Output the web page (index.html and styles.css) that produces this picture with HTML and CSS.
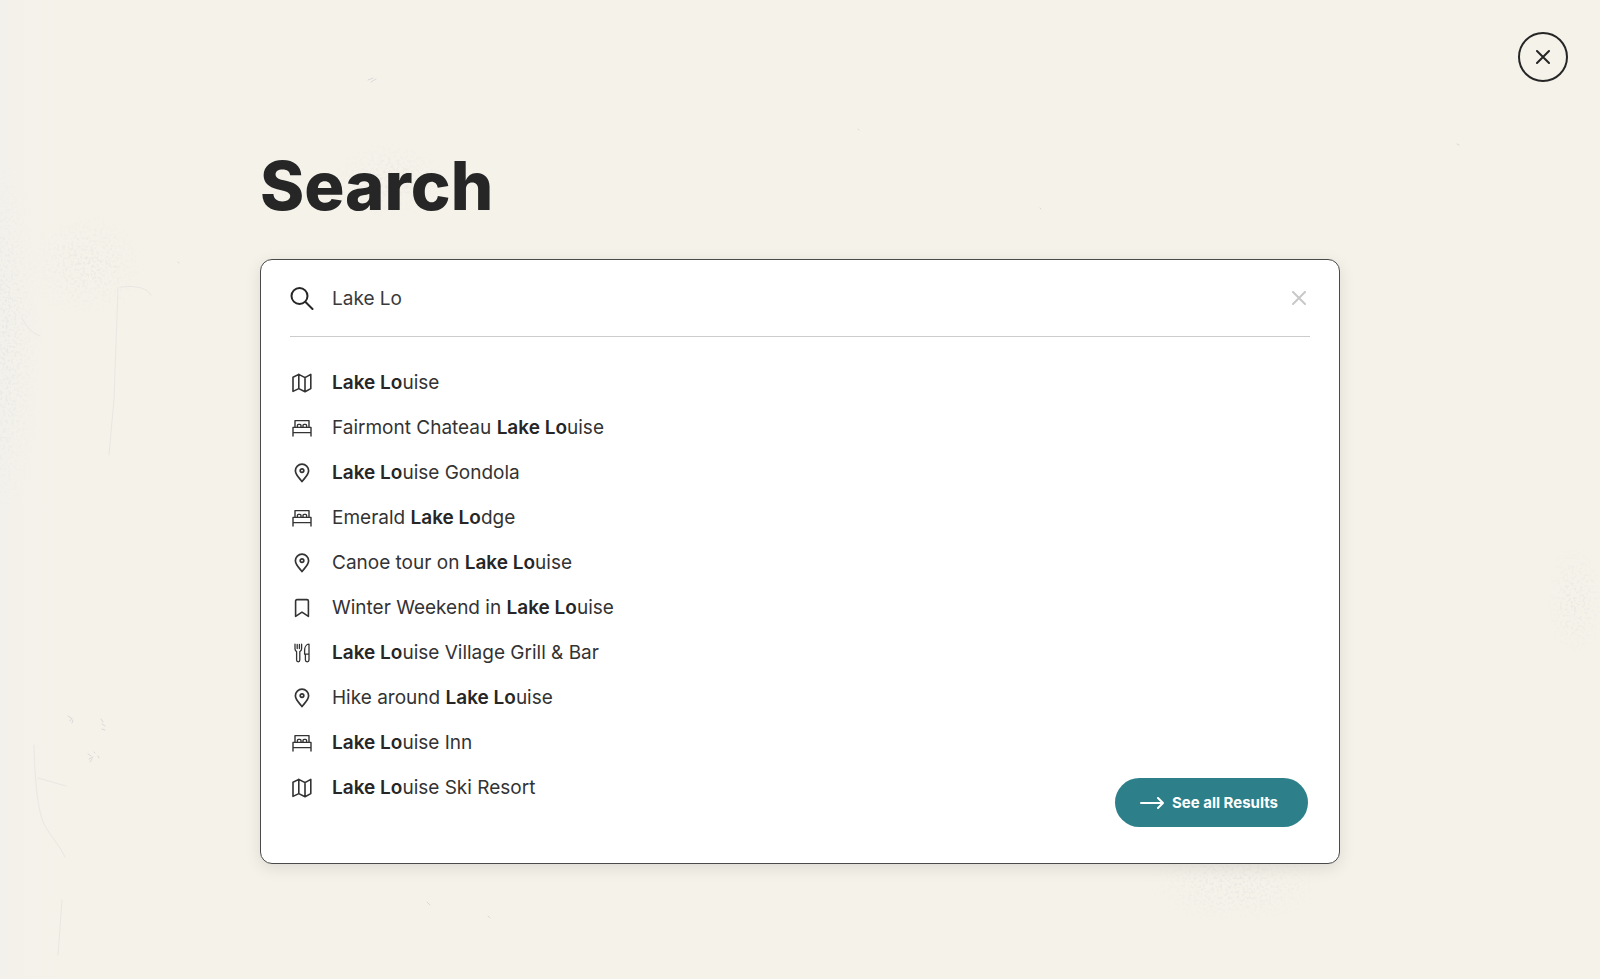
FILE: index.html
```html
<!DOCTYPE html>
<html lang="en">
<head>
    <meta charset="UTF-8">
    <meta name="viewport" content="width=device-width, initial-scale=1">
    <title>Search</title>
    <link rel="stylesheet" href="styles.css">
</head>
<body>
    <!-- Worn paper marks -->
    <svg class="paper" width="1600" height="979" viewBox="0 0 1600 979" aria-hidden="true">
        <defs>
            <filter id="grain" x="0" y="0" width="100%" height="100%">
                <feTurbulence type="fractalNoise" baseFrequency="0.35" numOctaves="3" seed="4" result="noise"/>
                <feColorMatrix in="noise" type="matrix" values="0 0 0 0 0.7  0 0 0 0 0.69  0 0 0 0 0.7  0 0 0 5 -2.4" result="specks"/>
                <feComposite in="specks" in2="SourceGraphic" operator="in"/>
            </filter>
            <radialGradient id="smudge">
                <stop offset="0" stop-color="#000" stop-opacity="0.35"/>
                <stop offset="1" stop-color="#000" stop-opacity="0"/>
            </radialGradient>
        </defs>
        <g filter="url(#grain)" fill="url(#smudge)">
            <ellipse cx="88" cy="265" rx="60" ry="55"/>
            <ellipse cx="5" cy="340" rx="35" ry="190"/>
            <ellipse cx="390" cy="180" rx="60" ry="40"/>
            <ellipse cx="1235" cy="885" rx="90" ry="40"/>
            <ellipse cx="1575" cy="600" rx="30" ry="60"/>
        </g>
        <g class="marks">
            <path d="M34 745C35 790 39 815 45 826C52 838 60 846 65 857"/>
            <path d="M38 778L66 786"/>
            <path d="M62 900L58 955"/>
            <path d="M118 288L114 400L109 455"/>
            <path d="M120 287Q145 284 151 295"/>
            <path d="M22 318Q28 332 40 336"/>
        </g>
        <g class="spots">
            <path d="M68 716l3 2m-1 3l2-3m0 5l1-3M101 719l2 3m-1 2l3 2m-3 3l3 1M88 754l3 2m-2 3l4-2m-3 5l2-3m6-3l1 2m-5-6l1 1M368 80l5-2m-2 4l5-3M488 916l2 2M427 902l3 3M1040 208l1 1M858 129l1 1M1457 144l2 1M178 262l1 1"/>
        </g>
    </svg>

    <header class="topbar">
        <button type="button" class="close-btn" aria-label="Close search">
            <svg width="14" height="14" viewBox="0 0 14 14"><path d="M1 1L13 13M13 1L1 13"/></svg>
        </button>
    </header>

    <main class="container">
        <h1>Search</h1>

        <form class="search-card">
            <div class="search-field">
                <label for="query" aria-label="Search">
                    <svg width="24" height="24" viewBox="0 0 24 24"><circle cx="9.5" cy="10" r="8"/><path d="M15.5 16L22.5 23"/></svg>
                </label>
                <input type="text" id="query" value="Lake Lo" autocomplete="off">
                <button type="button" class="clear-btn" aria-label="Clear">
                    <svg width="14" height="14" viewBox="0 0 14 14"><path d="M1 1L13 13M13 1L1 13"/></svg>
                </button>
            </div>

            <div class="search-body">
                <ul class="results">
                    <li><a href="#"><svg class="icon"><use href="#map"/></svg><span><b>Lake Lo</b>uise</span></a></li>
                    <li><a href="#"><svg class="icon"><use href="#bed"/></svg><span>Fairmont Chateau <b>Lake Lo</b>uise</span></a></li>
                    <li><a href="#"><svg class="icon"><use href="#pin"/></svg><span><b>Lake Lo</b>uise Gondola</span></a></li>
                    <li><a href="#"><svg class="icon"><use href="#bed"/></svg><span>Emerald <b>Lake Lo</b>dge</span></a></li>
                    <li><a href="#"><svg class="icon"><use href="#pin"/></svg><span>Canoe tour on <b>Lake Lo</b>uise</span></a></li>
                    <li><a href="#"><svg class="icon"><use href="#bookmark"/></svg><span>Winter Weekend in <b>Lake Lo</b>uise</span></a></li>
                    <li><a href="#"><svg class="icon"><use href="#food"/></svg><span><b>Lake Lo</b>uise Village Grill &amp; Bar</span></a></li>
                    <li><a href="#"><svg class="icon"><use href="#pin"/></svg><span>Hike around <b>Lake Lo</b>uise</span></a></li>
                    <li><a href="#"><svg class="icon"><use href="#bed"/></svg><span><b>Lake Lo</b>uise Inn</span></a></li>
                    <li><a href="#"><svg class="icon"><use href="#map"/></svg><span><b>Lake Lo</b>uise Ski Resort</span></a></li>
                </ul>

                <button type="submit" class="btn">
                    <svg width="24" height="12" viewBox="0 0 24 12"><path d="M1 6H23M18 1L23 6L18 11"/></svg>
                    See all Results
                </button>
            </div>
        </form>
    </main>

    <svg class="sprite" width="0" height="0" aria-hidden="true">
        <symbol id="map" viewBox="0 0 20 20">
            <path stroke-width="1.6" d="M1 4.2L6.8 1.4L13 4.6L18.8 1.4V15.6L13 18.8L6.8 15.6L1 18.4ZM6.8 1.4V15.6M13 4.6V18.8"/>
        </symbol>
        <symbol id="bed" viewBox="0 0 20 20">
            <path d="M3 9V2.6H17V9M1 18V9.4H19V18M1 14.6H19M5.4 9V7.4Q5.4 6.4 6.4 6.4H8Q9 6.4 9 7.4V9M11 9V7.4Q11 6.4 12 6.4H13.6Q14.6 6.4 14.6 7.4V9"/>
        </symbol>
        <symbol id="pin" viewBox="0 0 20 20">
            <path stroke-width="1.7" d="M10 18.6C8 15.6 3.4 12 3.4 7.8A6.6 6.6 0 0 1 16.6 7.8C16.6 12 12 15.6 10 18.6Z"/>
            <circle stroke-width="1.7" cx="10" cy="7.6" r="1.8"/>
        </symbol>
        <symbol id="bookmark" viewBox="0 0 20 20">
            <path stroke-width="1.6" d="M3.6 18.4V3Q3.6 1.6 5 1.6H15Q16.4 1.6 16.4 3V18.4L10 14.2Z"/>
        </symbol>
        <symbol id="food" viewBox="0 0 20 20">
            <path stroke-width="1.3" d="M3 1.2V5.8Q3 7.6 4.6 8.6V17Q4.6 18.8 6.2 18.8T7.8 17V8.6Q9.6 7.6 9.6 5.8V1.2M5.2 1.4V5.6M7.4 1.4V5.6M13.4 11.2V17Q13.4 18.8 15.2 18.8T17 17V1.2C14.4 1.2 12.6 4 12.6 7.4V11.2H17"/>
        </symbol>
    </svg>
</body>
</html>
```

FILE: styles.css
```css
* {
    box-sizing: border-box;
}

body {
    margin: 0;
    min-height: 100vh;
    font-family: Inter, "Liberation Sans", sans-serif;
    font-size: 19px;
    color: #262626;
    background: linear-gradient(90deg, #f3f1eb 0, #f5f2ea 60px);
}

svg {
    display: block;
    fill: none;
    stroke: currentColor;
    stroke-width: 2;
    stroke-linecap: round;
    stroke-linejoin: round;
}

button {
    font: inherit;
    border: none;
    background: none;
    padding: 0;
    cursor: pointer;
}

.paper {
    position: absolute;
    top: 0;
    left: 0;
    max-width: 100%;
    z-index: -1;
    stroke: none;
}

.marks {
    stroke: #e8e7e3;
    stroke-width: 1;
}

.spots {
    stroke: #d9d9d7;
    stroke-width: 1;
}

.sprite {
    position: absolute;
}

.topbar {
    display: flex;
    justify-content: flex-end;
    padding: 32px 32px 0;
}

.close-btn {
    display: flex;
    align-items: center;
    justify-content: center;
    width: 50px;
    height: 50px;
    border: 2px solid #262626;
    border-radius: 50%;
    color: #262626;
}

.container {
    max-width: 1128px;
    margin: 0 auto;
    padding: 64px 24px;
}

h1 {
    margin: 0 0 33px;
    font-size: 67px;
    font-weight: 800;
    line-height: 80px;
}

.search-card {
    padding: 0 29px 36px;
    background: #fff;
    border: 1px solid #4a4a4a;
    border-radius: 12px;
    box-shadow: 0 4px 16px rgba(0, 0, 0, 0.1);
}

.search-field {
    display: flex;
    align-items: center;
    height: 77px;
    padding-right: 4px;
    border-bottom: 1px solid #ccc;
}

.search-field input {
    flex: 1;
    min-width: 0;
    margin-left: 18px;
    padding: 0;
    border: none;
    outline: none;
    background: none;
    font: inherit;
    color: #3a3a3a;
}

.clear-btn {
    color: #c8c8c8;
}

.search-body {
    display: flex;
    align-items: flex-end;
    justify-content: space-between;
    padding-top: 23px;
}

.results {
    margin: 0;
    padding: 0 0 17px;
    list-style: none;
}

.results a {
    display: flex;
    align-items: center;
    gap: 20px;
    height: 45px;
    color: #333;
    text-decoration: none;
}

.results b {
    font-weight: 600;
    color: #262626;
}

.icon {
    width: 20px;
    height: 20px;
    margin-left: 2px;
    stroke-width: 1.4;
}

.btn {
    display: flex;
    align-items: center;
    gap: 8px;
    height: 49px;
    margin-right: 2px;
    padding: 0 30px 0 25px;
    border-radius: 25px;
    background: #2d7f89;
    color: #fff;
    font-size: 15px;
    font-weight: 700;
}

.btn:hover {
    background: #256a73;
}
```
